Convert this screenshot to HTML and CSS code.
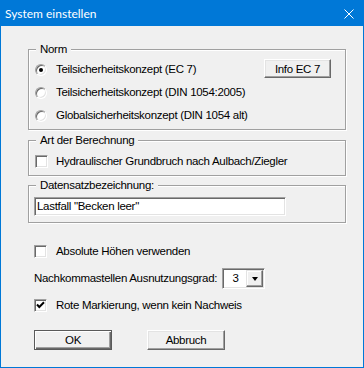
FILE: index.html
```html
<!DOCTYPE html>
<html lang="de">
<head>
    <meta charset="UTF-8">
    <title>System einstellen</title>
    <link rel="stylesheet" href="styles.css">
</head>
<body>
    <div class="window">
        <div class="titlebar">
            <span class="title">System einstellen</span>
            <svg class="close" width="10" height="10" viewBox="0 0 10 10">
                <path d="M0.5 0.5 L9.5 9.5 M9.5 0.5 L0.5 9.5" stroke="#fff" stroke-width="1" fill="none"/>
            </svg>
        </div>
        <div class="content">
            <div class="group group-norm">
                <div class="group-title">Norm</div>
                <div class="row row-first">
                    <span class="radio checked"></span>
                    <span>Teilsicherheitskonzept (EC 7)</span>
                    <button class="btn btn-info">Info EC 7</button>
                </div>
                <div class="row">
                    <span class="radio"></span>
                    <span>Teilsicherheitskonzept (DIN 1054:2005)</span>
                </div>
                <div class="row">
                    <span class="radio"></span>
                    <span>Globalsicherheitskonzept (DIN 1054 alt)</span>
                </div>
            </div>

            <div class="group group-art">
                <div class="group-title">Art der Berechnung</div>
                <div class="check-row">
                    <span class="check"></span>
                    <span>Hydraulischer Grundbruch nach Aulbach/Ziegler</span>
                </div>
            </div>

            <div class="group group-daten">
                <div class="group-title">Datensatzbezeichnung:</div>
                <div class="edit">Lastfall "Becken leer"</div>
            </div>

            <div class="check-row plain row-abs">
                <span class="check"></span>
                <span>Absolute Höhen verwenden</span>
            </div>

            <div class="combo-row plain">
                <span class="combo-label">Nachkommastellen Ausnutzungsgrad:</span>
                <div class="combo">
                    <span class="combo-value">3</span>
                    <span class="combo-btn"><span class="arrow"></span></span>
                </div>
            </div>

            <div class="check-row plain row-rot">
                <span class="check">
                    <svg width="9" height="9" viewBox="0 0 9 9">
                        <path d="M1 3.5 L3.3 6 L8 1.3" stroke="#000" stroke-width="2" fill="none"/>
                    </svg>
                </span>
                <span>Rote Markierung, wenn kein Nachweis</span>
            </div>

            <div class="buttons plain">
                <button class="btn btn-default">OK</button>
                <button class="btn">Abbruch</button>
            </div>
        </div>
    </div>
</body>
</html>
```

FILE: styles.css
```css
* {
    box-sizing: border-box;
}
body {
    margin: 0;
    font-family: "Liberation Sans", Arial, sans-serif;
    font-size: 11.5px;
    letter-spacing: -0.3px;
    line-height: 13px;
    color: #000;
}
.window {
    width: 364px;
    height: 368px;
    border: 1px solid #0078d7;
    border-top: 0;
    background-color: #f0f0f0;
    display: flex;
    flex-direction: column;
}
.titlebar {
    height: 26px;
    background-color: #0078d7;
    display: flex;
    align-items: center;
    padding-left: 4px;
    flex-shrink: 0;
}
.title {
    font-family: Lato, "Noto Sans", sans-serif;
    font-size: 12px;
    letter-spacing: 0;
    color: #fff;
    margin-top: 1px;
}
.close {
    margin-left: auto;
    margin-right: 9px;
    margin-top: 2px;
}
.content {
    display: flex;
    flex-direction: column;
    align-items: flex-start;
    padding-left: 27px;
    white-space: nowrap;
}

/* group boxes */
.group {
    width: 318px;
    border: 1px solid #a0a0a0;
    box-shadow: 1px 1px 0 #fff, inset 1px 1px 0 #fff;
    padding-left: 6px;
    display: flex;
    flex-direction: column;
    align-items: flex-start;
}
.group-title {
    margin: -7px 0 0 1px;
    padding: 0 4px;
    height: 13px;
    background-color: #f0f0f0;
}
.group-norm {
    margin-top: 23px;
    height: 81px;
}
.group-art {
    margin-top: 10px;
    height: 36px;
}
.group-daten {
    margin-top: 9px;
    height: 38px;
}

.row {
    display: flex;
    align-items: center;
    height: 23px;
    width: 100%;
}
.row-first {
    margin-top: 2px;
}
.check-row {
    display: flex;
    align-items: center;
    height: 13px;
    margin-top: 8px;
}

/* radio and check */
.radio,
.check {
    width: 13px;
    height: 13px;
    flex-shrink: 0;
    background-color: #fff;
    border: 1px solid;
    border-color: #a0a0a0 #fff #fff #a0a0a0;
    box-shadow: inset 1px 1px 0 #696969, inset -1px -1px 0 #e3e3e3;
    margin-right: 8px;
    display: flex;
    align-items: center;
    justify-content: center;
}
.radio {
    width: 12px;
    height: 12px;
    border-radius: 50%;
    margin-right: 9px;
}
.radio.checked::after {
    content: "";
    width: 4px;
    height: 4px;
    border-radius: 50%;
    background-color: #000;
}
.check svg {
    display: block;
}

/* buttons */
.btn {
    font-family: inherit;
    font-size: 11.5px;
    letter-spacing: -0.3px;
    color: #000;
    background-color: #f0f0f0;
    border: 1px solid;
    border-color: #fff #696969 #696969 #fff;
    box-shadow: inset -1px -1px 0 #a0a0a0, inset 1px 1px 0 #e3e3e3;
    padding: 0;
    width: 78px;
    height: 20px;
}
.btn-info {
    width: 67px;
    height: 19px;
    margin-left: auto;
    margin-right: 14px;
    align-self: flex-start;
    margin-top: 1px;
}
.btn-default {
    border: 1px solid #5a5a5a;
    box-shadow: inset 1px 1px 0 #fff, inset -1px -1px 0 #696969, inset -2px -2px 0 #a0a0a0;
}

/* edit */
.edit {
    margin-top: 5px;
    margin-left: -1px;
    width: 252px;
    height: 19px;
    background-color: #fff;
    border: 1px solid;
    border-color: #a0a0a0 #fff #fff #a0a0a0;
    box-shadow: inset 1px 1px 0 #696969, inset -1px -1px 0 #e3e3e3;
    padding: 2px 0 0 2px;
}

/* plain rows below the groups */
.plain {
    margin-left: 6px;
}
.plain .check {
    margin-right: 9px;
}
.row-abs {
    margin-top: 22px;
}
.row-rot {
    margin-top: 10px;
}
.combo-row {
    display: flex;
    align-items: center;
    margin-top: 10px;
    height: 21px;
}
.combo-label {
    width: 188px;
}
.combo {
    width: 43px;
    height: 21px;
    display: flex;
    background-color: #fff;
    border: 1px solid;
    border-color: #a0a0a0 #fff #fff #a0a0a0;
    box-shadow: inset 1px 1px 0 #696969, inset -1px -1px 0 #e3e3e3;
    padding: 1px;
}
.combo-value {
    flex: 1;
    display: flex;
    align-items: center;
    justify-content: center;
    padding-left: 1px;
}
.combo-btn {
    width: 17px;
    height: 17px;
    background-color: #f0f0f0;
    border: 1px solid;
    border-color: #e3e3e3 #696969 #696969 #e3e3e3;
    box-shadow: inset -1px -1px 0 #a0a0a0, inset 1px 1px 0 #fff;
    display: flex;
    align-items: center;
    justify-content: center;
}
.arrow {
    width: 0;
    height: 0;
    border-left: 3.5px solid transparent;
    border-right: 3.5px solid transparent;
    border-top: 4px solid #000;
}
.buttons {
    display: flex;
    gap: 35px;
    margin-top: 18px;
}
```
